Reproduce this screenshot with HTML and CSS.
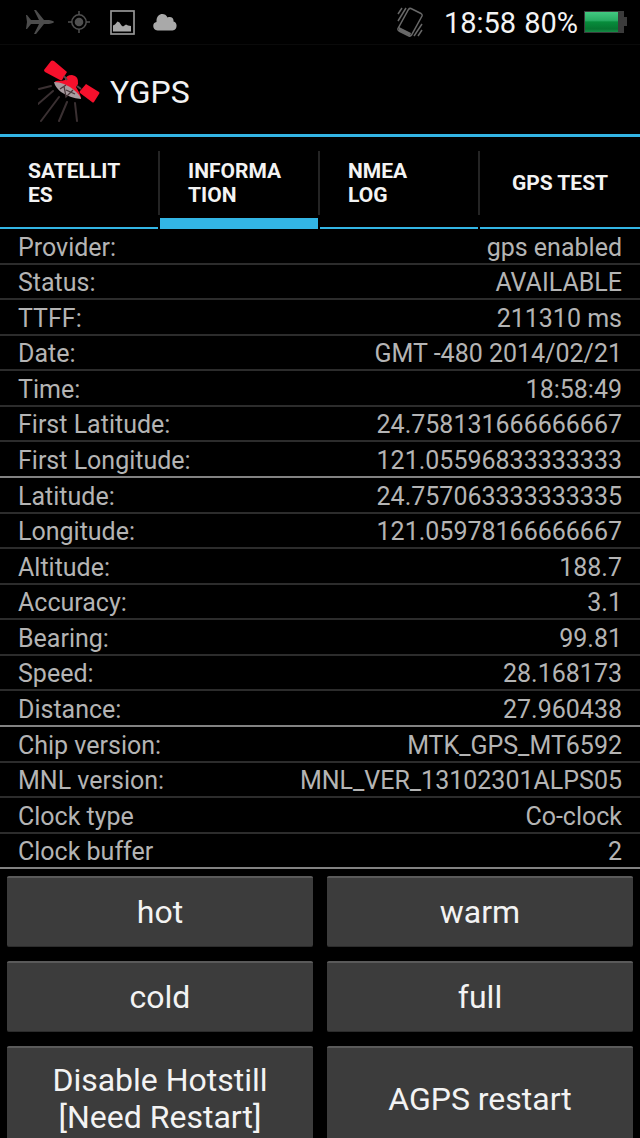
FILE: index.html
```html
<!DOCTYPE html>
<html lang="en">
<head>
<meta charset="utf-8">
<meta name="viewport" content="width=device-width, initial-scale=1">
<title>YGPS</title>
<link rel="stylesheet" href="styles.css">
</head>
<body>
<div class="screen">
  <div class="status-bar">
    <div class="status-icons">
      <svg class="icon-plane" viewBox="0 0 30 26" width="30" height="26" aria-hidden="true"><path fill="#4c4c4c" d="M1 6h1l4 5h8L9 1h2l8 10h5q5 1 5 2t-5 2h-5l-8 10H9l5-10H6l-4 5H1l1-7z"/></svg>
      <svg class="icon-target" viewBox="0 0 22 22" width="22" height="22" aria-hidden="true"><g fill="none" stroke="#505050" stroke-width="1.5"><circle cx="11" cy="11" r="7.2"/><path d="M11 0v4M11 18v4M0 11h4M18 11h4"/></g><circle cx="11" cy="11" r="4.3" fill="#505050"/></svg>
      <svg class="icon-image" viewBox="0 0 25 25" width="25" height="25" aria-hidden="true"><rect x="1" y="1" width="23" height="23" fill="none" stroke="#969696" stroke-width="1.7"/><path fill="#a9a9a9" d="M3 21.500v-6l2-1 2.500-3 2 1 2 3 1.500 1 3-2 2 1 3 .5v5.500z"/></svg>
      <svg class="icon-cloud" viewBox="0 0 24 17" width="24" height="17" aria-hidden="true"><path fill="#a9a9a9" d="M4.500 16.500C-1 16-1 8.500 3.500 8 3-1 12-2 14.500 3.500 18 2 21 4 20.500 7.500c4.500 1 4 8.500-1 9z"/></svg>
    </div>
    <div class="status-info">
      <svg class="icon-vibrate" viewBox="0 0 26 30" width="26" height="30" aria-hidden="true"><g fill="none" stroke="#686868" stroke-width="1.500"><path d="M11.500 2.500q1-1.500 2.500-1l10 5q1.500 1 1 2.500L14.500 28q-1 1.500-2.500 1l-10-5q-1.500-1-1-2.500z"/><path d="M9 1 1 14M5 1 1 7M25 17l-8 12M25 23l-4 6"/></g><path fill="#686868" d="m2 20 12 6-1 3-11-5z"/></svg>
      <span class="clock">18:58</span>
      <span class="charge">80%</span>
      <svg class="icon-battery" viewBox="0 0 43 22" width="43" height="22" aria-hidden="true"><defs><linearGradient id="charge" x2="0" y2="1"><stop offset="0" stop-color="#43c982"/><stop offset=".42" stop-color="#29ad64"/><stop offset=".5" stop-color="#078c3b"/><stop offset=".85" stop-color="#067531"/><stop offset="1" stop-color="#168c46"/></linearGradient></defs><path fill="#3b3b3b" d="M0 0h40v6h3v9h-3v7H0z"/><path fill="url(#charge)" d="M1 1h33v20H1z"/></svg>
    </div>
  </div>

  <header class="action-bar">
    <svg class="logo" viewBox="0 0 64 64" width="64" height="64" aria-hidden="true">
      <g fill="none" stroke="#3a3032" stroke-width="2" stroke-linecap="round"><path d="m1 29 12-3M0 44l15-13M3 61l18-24M21 61l8-19M39 61l-2-18"/></g>
      <g fill="#f5102c"><path d="M13 1q1-1 3 0l13 11-5 8q-1 1-2 0L7 12q-1-1-1-2z"/><path d="m48 24 13 8q1 1 0 2l-5 8q-1 1-2 0l-12-9q-1-1 0-2z"/><path d="M17 23q-1-3 6-2l4-1q1-5 7-5 7 1 6 9l-2 3q5 8 5 12L29 27z"/></g>
      <path fill="none" stroke="#52484a" stroke-width="2" d="m26 16 3 4m10 6 4 3"/>
      <path fill="#a79b9f" d="M16 22q10 0 20 8 7 6 7 9-11-1-20-7-6-5-7-10z"/>
      <path fill="none" stroke="#49393c" stroke-width="1.300" d="m26 26 2 11 7-7m-7 0 9 4M22 29l6-4"/>
    </svg>
    <h1 class="app-title">YGPS</h1>
  </header>

  <nav class="tabs" aria-label="Views">
    <button class="tab" type="button"><span>SATELLIT<br>ES</span></button>
    <button class="tab tab-active" type="button" aria-current="page"><span>INFORMA<br>TION</span></button>
    <button class="tab" type="button"><span>NMEA<br>LOG</span></button>
    <button class="tab tab-centered" type="button"><span>GPS TEST</span></button>
  </nav>

  <main>
    <table class="info">
      <tbody>
        <tr><th scope="row">Provider:</th><td>gps enabled</td></tr>
        <tr><th scope="row">Status:</th><td>AVAILABLE</td></tr>
        <tr><th scope="row">TTFF:</th><td>211310 ms</td></tr>
        <tr><th scope="row">Date:</th><td>GMT -480 2014/02/21</td></tr>
        <tr><th scope="row">Time:</th><td>18:58:49</td></tr>
        <tr><th scope="row">First Latitude:</th><td>24.758131666666667</td></tr>
        <tr><th scope="row">First Longitude:</th><td>121.05596833333333</td></tr>
      </tbody>
      <tbody>
        <tr><th scope="row">Latitude:</th><td>24.757063333333335</td></tr>
        <tr><th scope="row">Longitude:</th><td>121.05978166666667</td></tr>
        <tr><th scope="row">Altitude:</th><td>188.7</td></tr>
        <tr><th scope="row">Accuracy:</th><td>3.1</td></tr>
        <tr><th scope="row">Bearing:</th><td>99.81</td></tr>
        <tr><th scope="row">Speed:</th><td>28.168173</td></tr>
        <tr><th scope="row">Distance:</th><td>27.960438</td></tr>
      </tbody>
      <tbody>
        <tr><th scope="row">Chip version:</th><td>MTK_GPS_MT6592</td></tr>
        <tr><th scope="row">MNL version:</th><td>MNL_VER_13102301ALPS05</td></tr>
        <tr><th scope="row">Clock type</th><td>Co-clock</td></tr>
        <tr><th scope="row">Clock buffer</th><td>2</td></tr>
      </tbody>
    </table>

    <div class="actions">
      <button class="action" type="button">hot</button>
      <button class="action" type="button">warm</button>
      <button class="action" type="button">cold</button>
      <button class="action" type="button">full</button>
      <button class="action" type="button">Disable Hotstill<br>[Need Restart]</button>
      <button class="action" type="button">AGPS restart</button>
    </div>
  </main>
</div>
</body>
</html>
```
FILE: styles.css
```css
* {
  box-sizing: border-box;
}

body {
  margin: 0;
  background: #000;
  color: #f3f3f3;
  font-family: Roboto, "Liberation Sans", sans-serif;
}

button {
  margin: 0;
  border: 0;
  color: inherit;
  font: inherit;
}

svg {
  display: block;
  flex: none;
}

.screen {
  height: 100vh;
  overflow: hidden;
}

.status-bar {
  display: flex;
  align-items: center;
  justify-content: space-between;
  height: 45px;
  padding: 0 13px 0 25px;
  border-bottom: 1px solid #0a0a0a;
}

.status-icons {
  display: flex;
  align-items: center;
  gap: 18px;
}

.icon-target {
  margin-left: -5px;
}

.icon-image {
  margin-left: 2px;
}

.status-info {
  display: flex;
  align-items: center;
  gap: 8px;
  font-size: 29px;
  line-height: 44px;
}

.clock,
.charge {
  padding-top: 2px;
}

.icon-vibrate {
  margin-right: 13px;
}

.icon-battery {
  margin-left: -2px;
}

.action-bar {
  display: flex;
  align-items: center;
  gap: 8px;
  height: 92px;
  padding: 4px 38px 0;
  border-bottom: 3px solid #33b5e5;
}

.app-title {
  margin: 0;
  font-size: 32px;
  font-weight: 400;
  line-height: 40px;
}

.tabs {
  display: grid;
  grid-template-columns: repeat(4, 1fr);
  height: 92px;
  background: #000;
}

.tab {
  display: flex;
  align-items: center;
  padding: 0 28px;
  border-right: 2px solid #000;
  background:
    linear-gradient(#33b5e5, #33b5e5) bottom / 100% 2px no-repeat,
    #000;
  font-size: 21px;
  font-weight: 700;
  line-height: 24px;
  text-align: left;
  white-space: nowrap;
  position: relative;
}

.tab:last-child {
  border-right: 0;
}

.tab:not(:last-child)::after {
  content: "";
  position: absolute;
  top: 14px;
  right: -2px;
  width: 2px;
  height: 64px;
  background: #242424;
}

.tab-active {
  background:
    linear-gradient(#33b5e5, #33b5e5) bottom / 100% 11px no-repeat,
    #000;
}

.tab-centered {
  justify-content: center;
}

.info {
  width: 100%;
  border-collapse: separate;
  border-spacing: 0;
  color: #b4b4b4;
  font-size: 25px;
  line-height: 30px;
}

.info tr {
  height: 35px;
}

.info tr:nth-child(odd) {
  height: 36px;
}

.info th,
.info td {
  padding: 3px 18px 0;
  border-bottom: 2px solid #2c2c2c;
  font-weight: 400;
  text-align: left;
  white-space: nowrap;
}

.info td {
  text-align: right;
}

.info tr:last-child th,
.info tr:last-child td {
  border-bottom-color: #828282;
}

.actions {
  display: grid;
  grid-template-columns: 1fr 1fr;
  gap: 14px;
  padding: 7px;
}

.action {
  min-height: 71px;
  padding: 14px 8px;
  border-top: 2px solid #5a5a5a;
  border-bottom: 1px solid #2c2c2c;
  border-radius: 2px;
  background: #3c3c3c;
  font-size: 32px;
  line-height: 37px;
}
```
